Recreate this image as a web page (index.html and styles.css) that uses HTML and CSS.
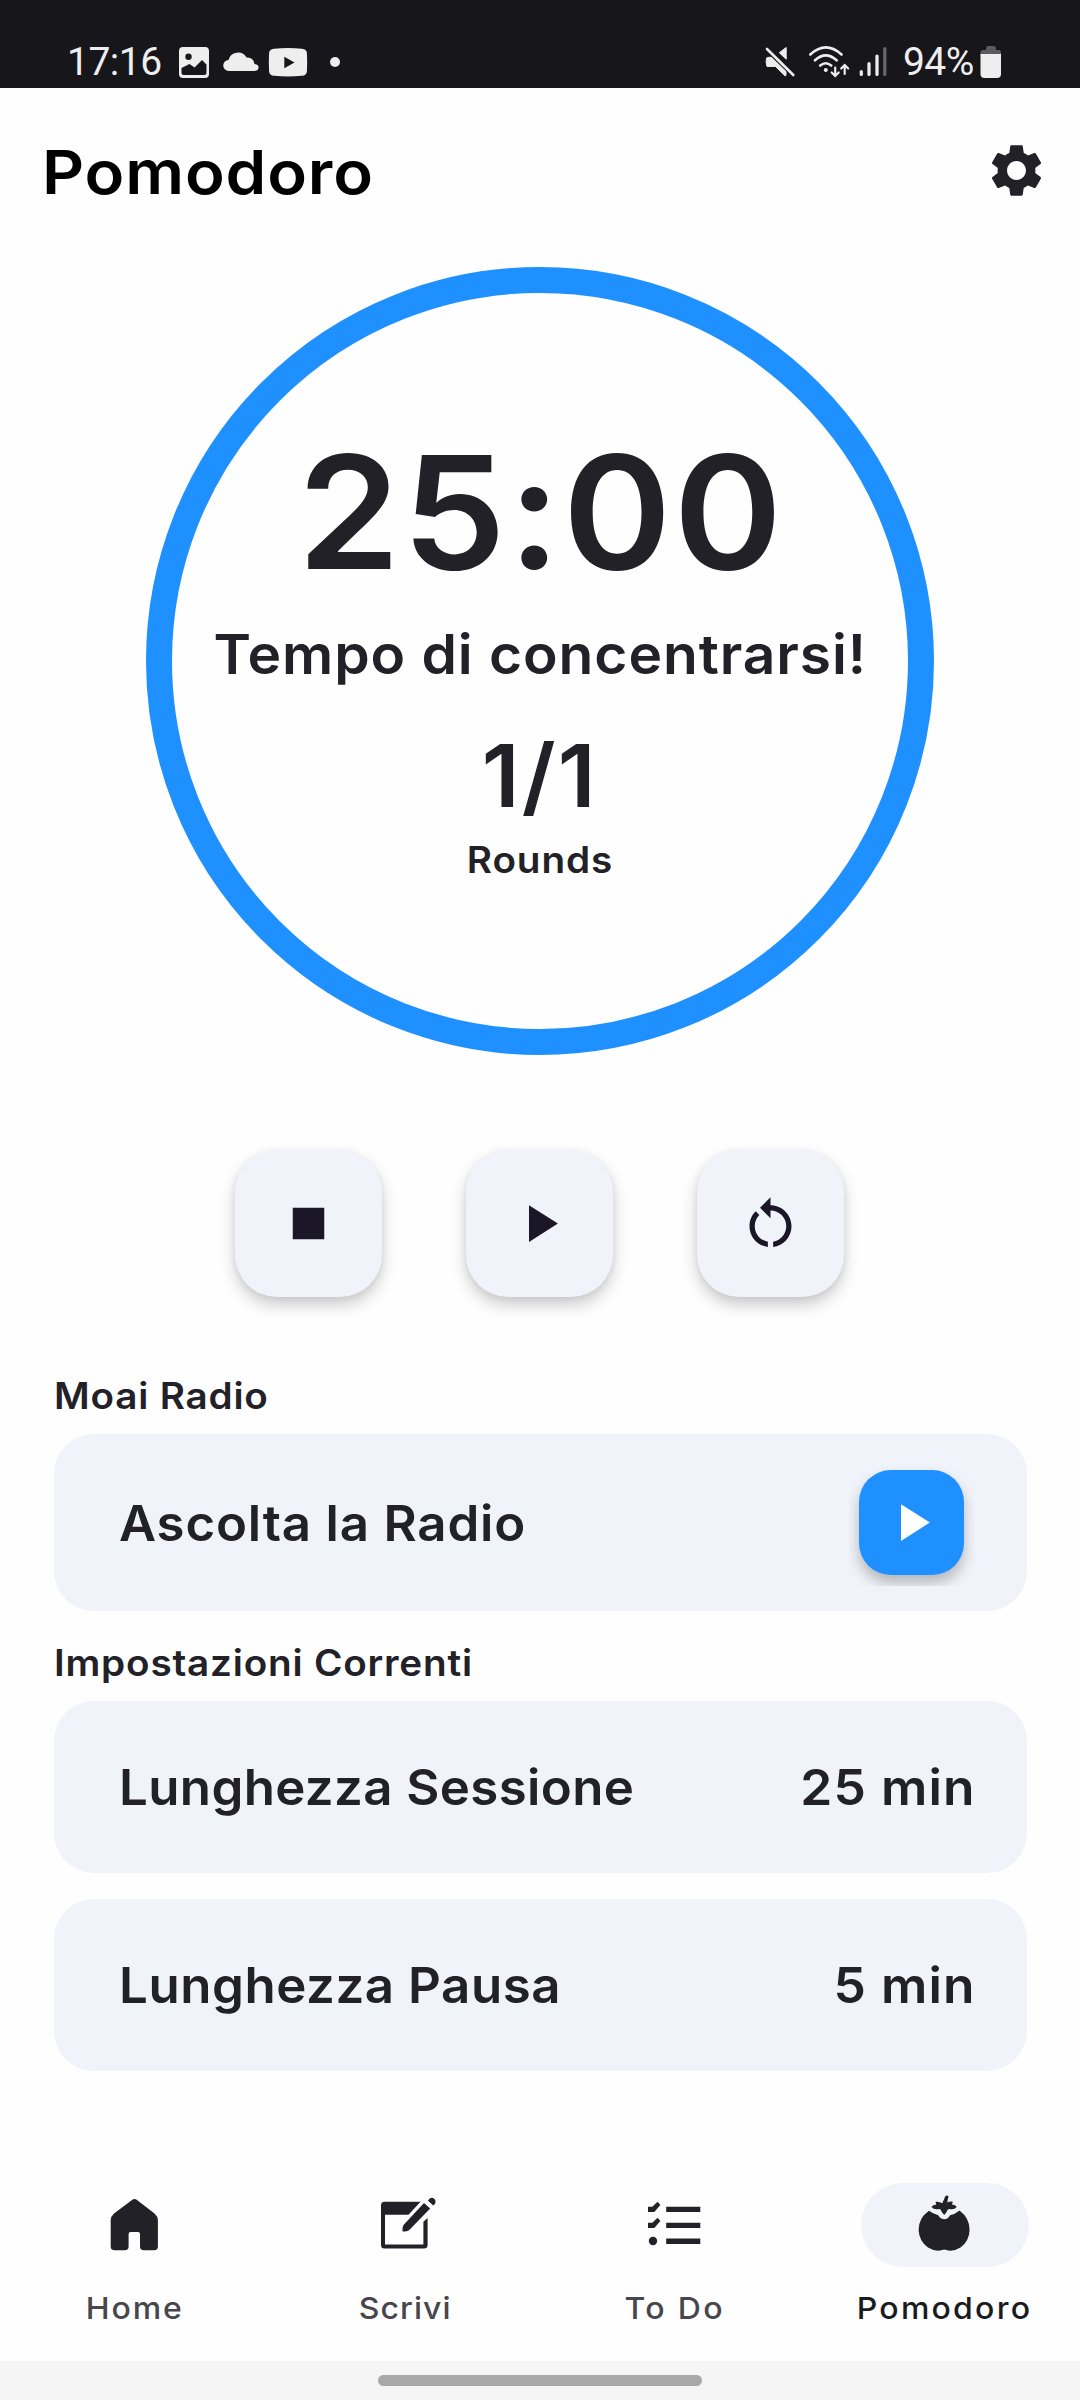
FILE: index.html
```html
<!DOCTYPE html>
<html lang="it">
<head>
<meta charset="utf-8">
<title>Pomodoro</title>
<link rel="stylesheet" href="styles.css">
</head>
<body>
<div class="statusbar">
  <span class="clock">17:16</span>
  <svg class="st-image" width="32" height="34" viewBox="0 0 32 34"><path fill="#eee" fill-rule="evenodd" d="M5 1H27Q31 1 31 5V28Q31 32 27 32H5Q1 32 1 28V5Q1 1 5 1ZM3.500 22V26.500Q3.500 29 6 29H26Q28.500 29 28.500 26.500V18.500L24 14L16.500 21.500L11.500 18ZM10.500 7.500A3.200 3.200 0 1 0 10.500 13.900A3.200 3.200 0 1 0 10.500 7.500Z"/></svg>
  <svg class="st-cloud" width="36" height="34" viewBox="0 0 36 34"><path fill="#eee" d="M6 25A5.500 5.500 0 0 1 5.500 14A9.800 9.800 0 0 1 23.500 11.500Q30.500 11 31.500 18Q36 18.500 35.500 22Q35 25 31 25Z"/></svg>
  <svg class="st-video" width="40" height="34" viewBox="0 0 40 34"><path fill="#eee" fill-rule="evenodd" d="M6 2.700Q20 1.500 34 2.700Q38.500 3 38.900 7Q39.500 16 38.900 25.500Q38.500 29.500 34 29.800Q20 31 6 29.800Q1.500 29.500 1.100 25.500Q.5 16 1.100 7Q1.500 3 6 2.700ZM16.300 10.700V22.300L26.500 16.500Z"/></svg>
  <span class="st-dot"></span>
  <svg class="st-mute" width="34" height="36" viewBox="0 0 34 36"><g fill="#eee" stroke="#eee" stroke-linejoin="round"><path d="M3.500 14Q6 12.800 8.500 13.400L23 27.500V31.500L22 31.800L12.500 22.500H4Q2.500 18 3.500 14Z"/><path d="M23.200 3.500V15.200L16.300 8.700Z"/><path stroke-width="2.600" stroke-linecap="round" d="M4 5L30.300 31"/></g></svg>
  <svg class="st-wifi" width="44" height="36" viewBox="0 0 44 36"><g fill="none" stroke="#eee" stroke-width="2.600" stroke-linecap="round"><path d="M3.300 10.500Q18.700-3.700 34.500 10.500M8 16.300Q18.700 6.500 29.600 16.300M13.200 21.500Q18.700 17 24.200 21.500"/><path d="M28.200 23.500V31.500M24.700 28.500L28.200 32L31.700 28.500M37.700 30V21.500M34.200 24.500L37.700 21L41.200 24.500" stroke-width="2.200"/></g><circle cx="18.800" cy="26" r="2" fill="#eee"/></svg>
  <svg class="st-signal" width="30" height="36" viewBox="0 0 30 36"><g stroke="#eee" stroke-width="3.200" stroke-linecap="round"><path d="M3.300 27.500V30.500M11 19.500V30.500M19 12V30.500"/><path stroke="#68686b" d="M26.800 4.500V30.500"/></g></svg>
  <span class="battery-level">94%</span>
  <svg class="st-battery" width="22" height="36" viewBox="0 0 22 36"><path fill="#5c5c5e" d="M6 4.500Q6 2 8 2H14Q16 2 16 4.500V6H18.500Q21 6 21 8.500V12H.5V8.500Q.5 6 3 6H6Z"/><path fill="#eee" d="M.5 10H21V30Q21 34 17 34H4.500Q.5 34 .5 30Z"/></svg>
</div>

<header class="header">
  <h1 class="title">Pomodoro</h1>
  <svg class="gear" viewBox="0 0 24 24"><path d="M19.140 12.940c.04-.3.06-.61.06-.94 0-.32-.02-.64-.07-.94l2.030-1.580c.18-.14.23-.41.12-.61l-1.920-3.320c-.12-.22-.37-.29-.59-.22l-2.390.96c-.5-.38-1.030-.7-1.620-.94l-.36-2.540c-.04-.24-.24-.41-.48-.41h-3.840c-.24 0-.43.17-.47.41l-.36 2.540c-.59.24-1.130.57-1.620.94l-2.390-.96c-.22-.08-.47 0-.59.22L2.740 8.870c-.12.21-.08.47.12.61l2.030 1.580c-.05.3-.09.63-.09.94s.02.64.07.94l-2.030 1.580c-.18.14-.23.41-.12.61l1.920 3.320c.12.22.37.29.59.22l2.390-.96c.5.38 1.030.7 1.620.94l.36 2.540c.05.24.24.41.48.41h3.840c.24 0 .44-.17.47-.41l.36-2.540c.59-.24 1.130-.56 1.620-.94l2.390.96c.22.08.47 0 .59-.22l1.920-3.320c.12-.22.07-.47-.12-.61l-2.010-1.580zM12 15.600c-1.980 0-3.600-1.620-3.600-3.600s1.620-3.600 3.600-3.600 3.600 1.620 3.600 3.600-1.620 3.600-3.600 3.600z"/></svg>
</header>

<main class="content">
  <section class="dial">
    <div class="time">25:00</div>
    <div class="phase">Tempo di concentrarsi!</div>
    <div class="count">1/1</div>
    <div class="rounds">Rounds</div>
  </section>

  <div class="controls">
    <button class="control"><svg viewBox="0 0 24 24"><path d="M6 6h12v12H6z"/></svg></button>
    <button class="control"><svg viewBox="0 0 24 24"><path d="M8 5v14l11-7z"/></svg></button>
    <button class="control"><svg viewBox="0 0 24 24"><path d="M12 5V2L8 6l4 4V7c3.310 0 6 2.690 6 6 0 2.970-2.170 5.430-5 5.910v2.020c3.950-.49 7-3.850 7-7.930 0-4.420-3.580-8-8-8zM6 13c0-1.650.67-3.150 1.760-4.240L6.340 7.340C4.900 8.790 4 10.790 4 13c0 4.080 3.050 7.440 7 7.930v-2.020c-2.830-.48-5-2.940-5-5.910z"/></svg></button>
  </div>

  <h2 class="label label-radio">Moai Radio</h2>
  <div class="card card-radio">
    <span class="key radio-name">Ascolta la Radio</span>
    <span class="play-wrap"><button class="play"><svg viewBox="0 0 24 24"><path d="M8 5v14l11-7z"/></svg></button></span>
  </div>

  <h2 class="label label-settings">Impostazioni Correnti</h2>
  <div class="settings">
    <div class="card"><span class="key session">Lunghezza Sessione</span><span class="value">25 min</span></div>
    <div class="card"><span class="key pause">Lunghezza Pausa</span><span class="value">5 min</span></div>
  </div>
</main>

<nav class="nav">
  <a class="item"><span class="pill"><svg viewBox="0 0 63 63"><path d="M29 6Q31.500 3.800 34 6L51.500 19.500Q54.900 22.500 54.900 26V52.500Q54.900 56.300 51 56.300H41Q37 56.300 37 52.500V40Q37 38 35 38H27.600Q25.600 38 25.600 40V52.500Q25.600 56.300 21.600 56.300H11.600Q7.700 56.300 7.700 52.500V26Q7.700 22.500 11 19.500Z"/></svg></span><span class="name home">Home</span></a>
  <a class="item"><span class="pill"><svg viewBox="0 0 63 63"><path d="M47.600 7.800L35.500 20.800H12V50.500H50.400V27.800L54.600 24V51Q54.600 54.600 51 54.600H11.500Q8 54.600 8 51V11.500Q8 7.800 11.500 7.800ZM51 9.100L57.200 14.500L36 36.200Q32.500 38 29.500 37.200Q29 34 30.500 31ZM55 6.800Q56.500 3.600 59 3.800Q62.600 4.500 62.600 8Q62.300 10.800 60.200 11.400Z"/></svg></span><span class="name scrivi">Scrivi</span></a>
  <a class="item"><span class="pill"><svg viewBox="0 0 63 63"><path d="M23.200 12.800H57.300V18.100H23.200ZM23.200 28.800H57.300V34.100H23.200ZM23.200 44.600H57.300V49.900H23.200ZM5 12.800H9.300L14.600 7.800L17.400 11L11.300 18.100H5ZM5 28.800H9.300L14.600 23.800L17.400 27L11.300 34.100H5Z"/><circle cx="10" cy="47" r="4.200"/></svg></span><span class="name todo">To Do</span></a>
  <a class="item active"><span class="pill"><svg viewBox="0 0 63 63"><path d="M16 16.800Q20 19.800 25.200 21.300Q27.500 25.200 31.300 25.200Q35 25.200 37 21.300Q42 20.300 46.500 16.500Q56.600 24 56.600 36Q56.300 47 47.500 53.500Q39.500 58.500 31.300 55.500Q23 58.500 15 53.500Q6 47 5.600 36Q5.600 24 16 16.800Z"/><path d="M32.300 2.200Q34 .8 35.500 2.300L34.200 8.500Q37 7.200 39.800 7.800L39 10.500Q42.500 10.800 43.800 13Q41 16.300 36.200 15L34.800 15.500Q33.800 18.500 31.200 21Q28.600 18.500 27.600 15.500L26 15Q21.300 16.300 18.400 13Q20 10.800 23.300 10.500L22.500 7.800Q26.300 7.200 29.300 9.200Z"/></svg></span><span class="name pomo">Pomodoro</span></a>
</nav>

<footer class="gesture"><span class="handle"></span></footer>
</body>
</html>
```
FILE: styles.css
```css
* { box-sizing: border-box; }

body {
  margin: 0;
  width: 1080px;
  height: 2400px;
  display: flex;
  flex-direction: column;
  background: #fefefe;
  color: #222127;
  font-family: Inter, "Liberation Sans", sans-serif;
  font-weight: 600;
  white-space: nowrap;
}

h1, h2 { margin: 0; }
svg { display: block; flex: none; }
button { border: 0; padding: 0; display: flex; align-items: center; justify-content: center; }

/* Status bar */
.statusbar {
  height: 88px;
  padding: 44px 78px 8px 67px;
  display: flex;
  background: #17161b;
  color: #eee;
  font: 400 39px/36px Roboto, sans-serif;
}
.clock { width: 111px; letter-spacing: -.5px; }
.st-image { margin-top: 2px; }
.st-cloud { margin: 2px 0 0 13px; }
.st-video { margin: 2px 0 0 9px; }
.st-dot { width: 10px; height: 10px; margin: 13px 0 0 22px; border-radius: 50%; background: #eee; }
.st-mute { margin-left: auto; }
.st-wifi { margin-left: 10px; }
.st-signal { margin-left: 7px; }
.battery-level { width: 76px; margin-left: 15px; letter-spacing: -.6px; }
.st-battery { margin-left: 1px; }

/* Header */
.header {
  height: 168px;
  padding: 0 32px 0 42px;
  display: flex;
  align-items: center;
  justify-content: space-between;
}
.title {
  color: #000;
  font-size: 60.500px;
  font-weight: 600;
  line-height: 72px;
  letter-spacing: .8px;
  transform: scaleX(1.08);
  transform-origin: left;
}
.gear { width: 63px; height: 63px; margin-bottom: 3px; fill: #222127; }

/* Timer dial */
.content { padding: 11px 53.500px 0; }
.dial {
  width: 788px;
  height: 788px;
  margin: 0 auto;
  padding-top: 139px;
  border: 26px solid #1e90ff;
  border-radius: 50%;
  display: flex;
  flex-direction: column;
  align-items: center;
}
.time { font-size: 157px; line-height: 160px; letter-spacing: 2px; margin-right: -1px; transform: scaleX(1.05); }
.phase { margin: 32px -1px 0 0; font-size: 54.700px; line-height: 60px; letter-spacing: .9px; transform: scaleX(1.04); }
.count { margin: 47px 0 0; font-size: 86px; line-height: 90px; letter-spacing: 2px; transform: scaleX(1.04); }
.rounds { margin: 16.500px -.8px 0 0; font-size: 36.500px; line-height: 44px; letter-spacing: .8px; transform: scaleX(1.06); }

/* Timer controls */
.controls { margin: 95px 0 0 -2px; display: flex; justify-content: center; gap: 84px; }
.control {
  width: 147px;
  height: 147px;
  border-radius: 42px;
  background: #f0f3fa;
  box-shadow: 0 8px 16px rgba(0, 0, 0, .2), 0 1px 6px rgba(0, 0, 0, .06);
}
.control svg { width: 63px; height: 63px; fill: #1c1728; }

/* Cards */
.label {
  font-size: 36.500px;
  font-weight: 600;
  line-height: 44px;
  letter-spacing: .74px;
  transform: scaleX(1.06);
  transform-origin: left;
}
.label-radio { margin-top: 76.500px; }
.label-settings { margin-top: 29.500px; }
.card {
  height: 172px;
  padding: 0 52px 0 65px;
  border-radius: 40px;
  display: flex;
  align-items: center;
  justify-content: space-between;
  background: #f0f3fa;
  font-size: 49.500px;
  line-height: 60px;
}
.card-radio { height: 177px; margin-top: 16.500px; }
.settings { margin-top: 16.500px; display: flex; flex-direction: column; gap: 26px; }
.key { transform: scaleX(1.03); transform-origin: left; }
.radio-name { letter-spacing: .8px; }
.session { letter-spacing: .37px; }
.pause { letter-spacing: .55px; }
.value { letter-spacing: 1.050px; margin-right: -1px; transform: scaleX(1.04); transform-origin: right; }
.play-wrap { padding: 10.500px; overflow: hidden; }
.play {
  width: 105px;
  height: 105px;
  border-radius: 32px;
  background: #1e90ff;
  box-shadow: 0 8px 14px rgba(0, 0, 0, .25);
}
.play svg { width: 63px; height: 63px; fill: #fff; }

/* Bottom navigation */
.nav { margin-top: 112px; height: 178px; display: grid; grid-template-columns: repeat(4, 1fr); }
.item { display: flex; flex-direction: column; align-items: center; color: #47464c; }
.pill { width: 168px; height: 84px; border-radius: 42px; display: flex; align-items: center; justify-content: center; }
.pill svg { width: 63px; height: 63px; margin-right: 1px; fill: #222127; }
.active { color: #1b1b1f; }
.active .pill { background: #f0f3fa; }
.name { margin-top: 21px; font-size: 30.500px; font-weight: 550; line-height: 40px; transform: scaleX(1.05); }
.home { letter-spacing: 1.850px; }
.scrivi { letter-spacing: 1px; }
.todo { letter-spacing: 2.200px; }
.pomo { letter-spacing: 2.100px; }

/* Gesture bar */
.gesture { flex: 1; padding-top: 14px; background: #f5f5f5; }
.handle { display: block; width: 324px; height: 11px; margin: 0 auto; border-radius: 6px; background: #a8a8a8; }
```
